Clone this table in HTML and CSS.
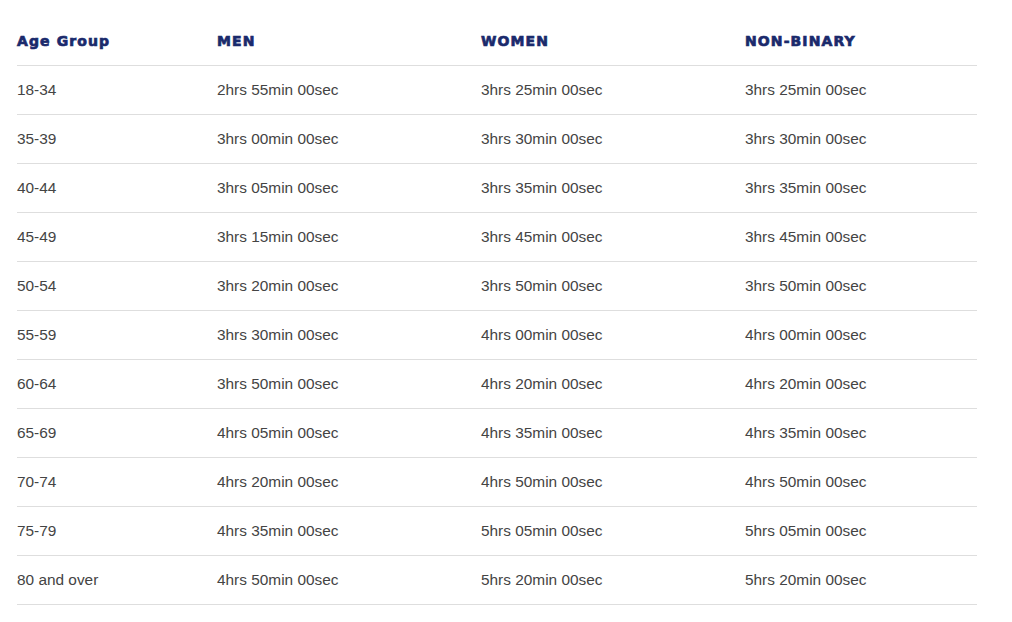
FILE: index.html
```html
<!DOCTYPE html>
<html>
<head>
<meta charset="utf-8">
<link rel="stylesheet" href="styles.css">
</head>
<body>
<table class="times">
  <thead>
    <tr><th>Age Group</th><th>MEN</th><th>WOMEN</th><th>NON-BINARY</th></tr>
  </thead>
  <tbody>
    <tr><td>18-34</td><td>2hrs 55min 00sec</td><td>3hrs 25min 00sec</td><td>3hrs 25min 00sec</td></tr>
    <tr><td>35-39</td><td>3hrs 00min 00sec</td><td>3hrs 30min 00sec</td><td>3hrs 30min 00sec</td></tr>
    <tr><td>40-44</td><td>3hrs 05min 00sec</td><td>3hrs 35min 00sec</td><td>3hrs 35min 00sec</td></tr>
    <tr><td>45-49</td><td>3hrs 15min 00sec</td><td>3hrs 45min 00sec</td><td>3hrs 45min 00sec</td></tr>
    <tr><td>50-54</td><td>3hrs 20min 00sec</td><td>3hrs 50min 00sec</td><td>3hrs 50min 00sec</td></tr>
    <tr><td>55-59</td><td>3hrs 30min 00sec</td><td>4hrs 00min 00sec</td><td>4hrs 00min 00sec</td></tr>
    <tr><td>60-64</td><td>3hrs 50min 00sec</td><td>4hrs 20min 00sec</td><td>4hrs 20min 00sec</td></tr>
    <tr><td>65-69</td><td>4hrs 05min 00sec</td><td>4hrs 35min 00sec</td><td>4hrs 35min 00sec</td></tr>
    <tr><td>70-74</td><td>4hrs 20min 00sec</td><td>4hrs 50min 00sec</td><td>4hrs 50min 00sec</td></tr>
    <tr><td>75-79</td><td>4hrs 35min 00sec</td><td>5hrs 05min 00sec</td><td>5hrs 05min 00sec</td></tr>
    <tr><td>80 and over</td><td>4hrs 50min 00sec</td><td>5hrs 20min 00sec</td><td>5hrs 20min 00sec</td></tr>
  </tbody>
</table>
</body>
</html>
```
FILE: styles.css
```css
html, body {
  margin: 0;
  padding: 0;
  background: #fff;
}
body {
  padding: 16px 0 0 17px;
  font-family: "Liberation Sans", Arial, sans-serif;
}
.times {
  width: 960px;
  border-collapse: collapse;
  table-layout: fixed;
}
.times th:nth-child(1) { width: 200px; }
.times th:nth-child(2) { width: 264px; }
.times th:nth-child(3) { width: 264px; }
.times th:nth-child(4) { width: 232px; }
.times th {
  height: 49px;
  padding: 0;
  text-align: left;
  vertical-align: middle;
  font-family: "DejaVu Sans", sans-serif;
  font-weight: bold;
  font-size: 14px;
  letter-spacing: 1.1px;
  -webkit-text-stroke: 0.7px #1a2a6c;
  color: #1a2a6c;
  border-bottom: 1px solid #dedede;
}
.times td {
  height: 48px;
  padding: 0;
  vertical-align: middle;
  font-size: 15.4px;
  color: #444;
  border-bottom: 1px solid #dedede;
}
```
